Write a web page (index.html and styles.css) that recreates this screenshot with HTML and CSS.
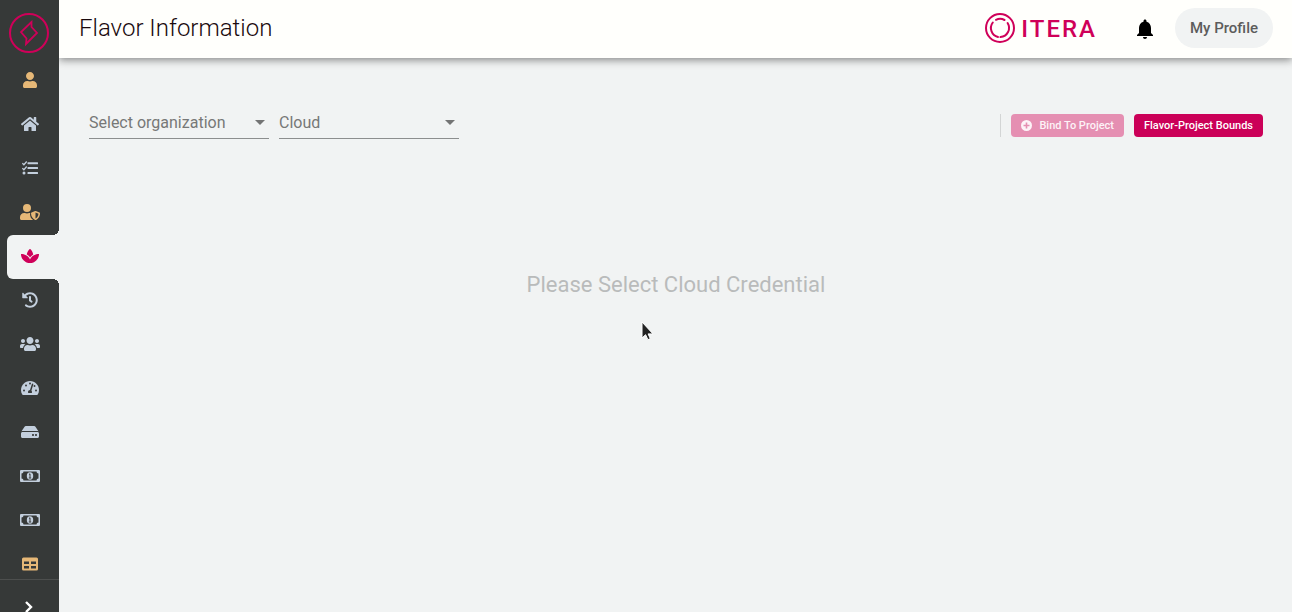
FILE: index.html
```html
<!DOCTYPE html>
<html lang="en">
<head>
<meta charset="utf-8">
<meta name="viewport" content="width=device-width, initial-scale=1">
<title>Flavor Information</title>
<link rel="stylesheet" href="styles.css">
</head>
<body>
<div class="app">
  <aside class="sidebar">
    <a class="brand" href="#" aria-label="Home page">
      <svg width="42" height="42" viewBox="0 0 42 42" fill="none" stroke="#cf0059">
        <circle cx="21" cy="21" r="19" stroke-width="2"/>
        <path d="M23.500 10L13 20l5.500 6.500L18 32l11-11-5.500-6z" stroke-width="1.800"/>
      </svg>
    </a>
    <nav class="menu">
      <a class="item gold" href="#" aria-label="Users"><svg width="14" height="16" viewBox="0 0 448 512"><path d="M224 256c70.700 0 128-57.300 128-128S294.700 0 224 0 96 57.300 96 128s57.300 128 128 128zm89.600 32h-16.700c-22.200 10.200-46.900 16-72.900 16s-50.600-5.800-72.900-16h-16.700C60.200 288 0 348.200 0 422.400V464c0 26.500 21.500 48 48 48h352c26.500 0 48-21.500 48-48v-41.600c0-74.200-60.200-134.400-134.400-134.400z"/></svg></a>
      <a class="item" href="#" aria-label="Home"><svg width="18" height="16" viewBox="0 0 576 512"><path d="M280.370 148.260L96 300.110V464a16 16 0 0 0 16 16l112.060-.29a16 16 0 0 0 15.920-16V368a16 16 0 0 1 16-16h64a16 16 0 0 1 16 16v95.640a16 16 0 0 0 16 16.050L464 480a16 16 0 0 0 16-16V300L295.670 148.260a12.190 12.190 0 0 0-15.300 0zM571.600 251.470L488 182.560V44.050a12 12 0 0 0-12-12h-56a12 12 0 0 0-12 12v72.610L318.470 43a48 48 0 0 0-61 0L4.340 251.470a12 12 0 0 0-1.600 16.900l25.500 31A12 12 0 0 0 45.150 301l235.220-193.740a12.190 12.190 0 0 1 15.300 0L530.900 301a12 12 0 0 0 16.900-1.600l25.500-31a12 12 0 0 0-1.700-16.930z"/></svg></a>
      <a class="item" href="#" aria-label="Tasks"><svg width="16" height="16" viewBox="0 0 16 16"><path d="M6 2.200h9.500q.5 0 .5.500v1q0 .5-.5.500H6q-.5 0-.5-.5v-1q0-.5.5-.5zM6 7h9.500q.5 0 .5.500v1q0 .5-.5.500H6q-.5 0-.5-.5v-1q0-.5.500-.5zM6 12h9.500q.5 0 .5.500v1q0 .5-.5.500H6q-.5 0-.5-.5v-1q0-.5.500-.5z"/><circle cx="2" cy="13" r="1.500"/><path d="M.4 3.200l1.500 1.500L4.700 1.500M.4 8.200l1.500 1.500L4.700 6.500" fill="none" stroke="currentColor" stroke-width="1.300"/></svg></a>
      <a class="item gold" href="#" aria-label="Roles"><svg width="20" height="16" viewBox="0 0 640 512"><path d="M224 256a128 128 0 1 0 0-256 128 128 0 0 0 0 256zm96 68.500c0-12 4-24 11-34-6-1.500-12-2.500-17.400-2.500h-16.700c-22.200 10.200-46.900 16-72.900 16s-50.600-5.800-72.900-16h-16.700C60.200 288 0 348.200 0 422.400V464c0 26.500 21.500 48 48 48h352c7 0 14-2 20-4-70-40-100-115-100-183.500z"/><path fill-rule="evenodd" d="M622.300 271.100l-115.200-45c-4.100-1.600-12.600-3.700-22.200 0l-115.200 45c-10.700 4.200-17.700 14-17.700 24.900 0 111.600 68.700 188.800 132.900 213.900 9.600 3.700 18 1.600 22.200 0C558.400 489.900 640 420.500 640 296c0-10.900-7-20.700-17.700-24.900zM496 462.400V273.300l95.500 37.300c-5.600 87.100-60.900 135.400-95.500 151.800z"/></svg></a>
      <a class="item active" href="#" aria-label="Flavors" aria-current="page"><svg width="18" height="16" viewBox="0 0 576 512"><path d="M568.250 192c-29.040.13-135.010 6.160-213.840 83-33.120 29.630-53.360 63.300-66.410 94.860-13.050-31.560-33.290-65.230-66.410-94.860-78.830-76.840-184.800-82.870-213.840-83-4.410-.02-7.790 3.400-7.750 7.820.23 27.920 7.140 126.140 88.770 199.300C172.790 480.940 256 480 288 480s115.190.95 199.230-80.880c81.640-73.170 88.540-171.380 88.770-199.300.04-4.420-3.340-7.840-7.750-7.820zM287.980 302.600c12.820-18.850 27.600-35.780 44.090-50.520 19.090-18.610 39.580-33.300 60.260-45.180-16.440-70.500-51.720-133.050-96.730-172.220-4.110-3.580-11.020-3.580-15.140 0-44.990 39.140-80.270 101.630-96.740 172.070 20.370 11.700 40.500 26.140 59.220 44.390a282.768 282.768 0 0 1 45.040 51.460z"/></svg></a>
      <a class="item" href="#" aria-label="History"><svg width="16" height="16" viewBox="0 0 512 512"><path d="M504 255.531c.253 136.640-111.180 248.372-247.820 248.468-59.015.042-113.223-20.530-155.822-54.911-11.077-8.940-11.905-25.541-1.839-35.607l11.267-11.267c8.609-8.609 22.353-9.551 31.891-1.984C173.062 425.135 212.781 440 256 440c101.705 0 184-82.311 184-184 0-101.705-82.311-184-184-184-48.814 0-93.149 18.969-126.068 49.932l50.754 50.754c10.080 10.080 2.941 27.314-11.313 27.314H24c-8.837 0-16-7.163-16-16V38.627c0-14.254 17.234-21.393 27.314-11.314l49.372 49.372C129.209 34.136 189.552 8 256 8c136.810 0 247.747 110.780 248 247.531zm-180.912 78.784l9.823-12.630c8.138-10.463 6.253-25.542-4.210-33.679L288 256.349V152c0-13.255-10.745-24-24-24h-16c-13.255 0-24 10.745-24 24v135.651l65.409 50.874c10.463 8.137 25.541 6.253 33.679-4.210z"/></svg></a>
      <a class="item" href="#" aria-label="Groups"><svg width="20" height="16" viewBox="0 0 640 512"><path d="M96 224c35.300 0 64-28.700 64-64s-28.700-64-64-64-64 28.700-64 64 28.700 64 64 64zm448 0c35.300 0 64-28.700 64-64s-28.700-64-64-64-64 28.700-64 64 28.700 64 64 64zm32 32h-64c-17.600 0-33.500 7.100-45.100 18.600 40.300 22.100 68.900 62 75.100 109.400h66c17.700 0 32-14.300 32-32v-32c0-35.300-28.700-64-64-64zm-256 0c61.900 0 112-50.100 112-112S381.900 32 320 32 208 82.100 208 144s50.100 112 112 112zm76.800 32h-8.300c-20.800 10-43.900 16-68.500 16s-47.600-6-68.500-16h-8.300C179.600 288 128 339.600 128 403.200V432c0 26.500 21.500 48 48 48h288c26.500 0 48-21.500 48-48v-28.800c0-63.600-51.600-115.200-115.200-115.200zm-223.700-13.400C161.500 263.100 145.600 256 128 256H64c-35.300 0-64 28.700-64 64v32c0 17.700 14.300 32 32 32h65.900c6.300-47.400 34.900-87.300 75.200-109.400z"/></svg></a>
      <a class="item" href="#" aria-label="Quotas"><svg width="18" height="16" viewBox="0 0 576 512"><path d="M288 32C129 32 0 161 0 320c0 53 14 102 39 145 6 10 16 15 27 15h444c11 0 21-5 27-15 25-43 39-92 39-145C576 161 447 32 288 32z"/><g fill="#363938"><circle cx="288" cy="112" r="31"/><circle cx="160" cy="176" r="31"/><circle cx="96" cy="336" r="31"/><circle cx="480" cy="336" r="31"/><circle cx="432" cy="190" r="31"/><path d="M370 115q28 0 23 28l-59 196q18 20 18 45 0 16-8 32H232q-8-16-8-32c0-34 29-64 64-64l60-190q5-15 22-15z"/></g></svg></a>
      <a class="item" href="#" aria-label="Volumes"><svg width="18" height="16" viewBox="0 0 576 512"><path d="M576 304v96c0 26.510-21.490 48-48 48H48c-26.510 0-48-21.490-48-48v-96c0-26.510 21.490-48 48-48h480c26.510 0 48 21.490 48 48zm-48-80a79.557 79.557 0 0 1 30.777 6.165L462.250 85.374A48.003 48.003 0 0 0 422.311 64H153.689a48 48 0 0 0-39.938 21.374L17.223 230.165A79.557 79.557 0 0 1 48 224h480zm-48 96c-17.673 0-32 14.327-32 32s14.327 32 32 32 32-14.327 32-32-14.327-32-32-32zm-96 0c-17.673 0-32 14.327-32 32s14.327 32 32 32 32-14.327 32-32-14.327-32-32-32z"/></svg></a>
      <a class="item" href="#" aria-label="Billing"><svg width="20" height="16" viewBox="0 0 20 16"><path fill-rule="evenodd" d="M1 2h18q1 0 1 1v10q0 1-1 1H1q-1 0-1-1V3q0-1 1-1zM3.500 3.500a2 2 0 0 1-2 2v5a2 2 0 0 1 2 2h13a2 2 0 0 1 2-2v-5a2 2 0 0 1-2-2z"/><ellipse cx="10" cy="8" rx="3.200" ry="3.700"/><path d="M9 6.500l1-.7v4M8.800 10h2.400" fill="none" stroke="#363938" stroke-width="1"/></svg></a>
      <a class="item" href="#" aria-label="Pricing"><svg width="20" height="16" viewBox="0 0 20 16"><path fill-rule="evenodd" d="M1 2h18q1 0 1 1v10q0 1-1 1H1q-1 0-1-1V3q0-1 1-1zM3.500 3.500a2 2 0 0 1-2 2v5a2 2 0 0 1 2 2h13a2 2 0 0 1 2-2v-5a2 2 0 0 1-2-2z"/><ellipse cx="10" cy="8" rx="3.200" ry="3.700"/><path d="M9 6.500l1-.7v4M8.800 10h2.400" fill="none" stroke="#363938" stroke-width="1"/></svg></a>
      <a class="item gold" href="#" aria-label="Tables"><svg width="16" height="16" viewBox="0 0 16 16"><path fill-rule="evenodd" d="M1.500 1.500h13q1.500 0 1.500 1.500v10q0 1.500-1.500 1.500h-13q-1.500 0-1.500-1.500V3q0-1.500 1.500-1.500zM2 5.500V8h5V5.500zM9 5.500V8h5V5.500zM2 10v2.500h5V10zM9 10v2.500h5V10z"/></svg></a>
    </nav>
    <button class="expand" type="button" aria-label="Expand menu"><svg width="10" height="14" viewBox="0 0 10 14"><path d="M2 2l5 5-5 5" fill="none" stroke="#fff" stroke-width="2.400"/></svg></button>
  </aside>

  <div class="page">
    <header class="topbar">
      <h1 class="title">Flavor Information</h1>
      <div class="logo">
        <svg width="32" height="32" viewBox="0 0 32 32" fill="none" stroke="#cf0059" stroke-width="2">
          <circle cx="16" cy="16" r="14"/>
          <path d="M12 7.800A9.200 9.200 0 0 1 20.500 8M8.800 10.500A9.200 9.200 0 0 0 14 25M16.500 25.100A9.200 9.200 0 0 0 23.600 11" stroke-linecap="round"/>
        </svg>
        <span class="wordmark">ITERA</span>
      </div>
      <button class="bell" type="button" aria-label="Notifications"><svg width="24" height="24" viewBox="0 0 24 24"><path d="M12 22c1.100 0 2-.9 2-2h-4c0 1.100.89 2 2 2zm6-6v-5c0-3.070-1.640-5.640-4.500-6.320V4c0-.83-.67-1.500-1.500-1.500s-1.500.67-1.500 1.500v.68C7.630 5.360 6 7.920 6 11v5l-2 2v1h16v-1l-2-2z"/></svg></button>
      <button class="profile" type="button">My Profile</button>
    </header>

    <main class="content">
      <div class="toolbar">
        <div class="field">
          <select class="select" aria-label="Select organization"><option>Select organization</option></select>
          <svg class="arrow" width="10" height="5" viewBox="0 0 10 5"><path d="M0 0h10L5 5z"/></svg>
        </div>
        <div class="field">
          <select class="select" aria-label="Cloud"><option>Cloud</option></select>
          <svg class="arrow" width="10" height="5" viewBox="0 0 10 5"><path d="M0 0h10L5 5z"/></svg>
        </div>
        <div class="actions">
          <button class="btn" type="button" disabled>
            <svg width="11" height="11" viewBox="0 0 11 11"><path fill-rule="evenodd" d="M5.500 0a5.500 5.500 0 1 0 0 11 5.500 5.500 0 0 0 0-11zM4.700 2.500h1.600v2.200h2.200v1.600H6.300v2.200H4.700V6.300H2.500V4.700h2.200z"/></svg>
            Bind To Project
          </button>
          <button class="btn" type="button">Flavor-Project Bounds</button>
        </div>
      </div>
      <p class="empty">Please Select Cloud Credential</p>
    </main>
  </div>

  <svg class="pointer" width="14" height="22" viewBox="0 0 14 22"><path d="M1 1v16l3.600-3.300 2.300 5 2.400-1.100-2.200-4.700H12z" fill="#222" stroke="#fff" stroke-width="1"/></svg>
</div>
</body>
</html>
```

FILE: styles.css
```css
* {
  box-sizing: border-box;
}

body {
  margin: 0;
  background: #f1f3f3;
  font-family: Roboto, "Liberation Sans", sans-serif;
}

button,
select {
  margin: 0;
  border: 0;
  font-family: inherit;
}

.app {
  position: relative;
  display: flex;
  height: 100vh;
  overflow: hidden;
}

.sidebar {
  display: flex;
  flex-direction: column;
  flex: 0 0 59px;
  background: #363938;
}

.brand {
  display: flex;
  flex: 0 0 59px;
  align-items: flex-end;
  justify-content: center;
  padding: 0 1px 5px 0;
}

.menu {
  flex: 1;
  min-height: 0;
  overflow: hidden;
}

.item {
  display: flex;
  align-items: center;
  justify-content: center;
  height: 44px;
  padding-bottom: 2px;
  color: #c3cfdd;
}

.item svg,
.btn svg,
.arrow {
  fill: currentColor;
}

.gold {
  color: #e6b877;
}

.active {
  position: relative;
  margin-left: 7px;
  padding-right: 7px;
  border-radius: 6px 0 0 6px;
  background: #f1f3f3;
  color: #cf0059;
}

/* Rounded corners of the dark bar above and below the active item */
.active::before,
.active::after {
  content: "";
  position: absolute;
  right: 0;
  width: 6px;
  height: 6px;
}

.active::before {
  top: -6px;
  background: radial-gradient(circle at 0 0, #363938 6px, #f1f3f3 6px);
}

.active::after {
  bottom: -6px;
  background: radial-gradient(circle at 0 100%, #363938 6px, #f1f3f3 6px);
}

.expand {
  display: flex;
  flex: 0 0 33px;
  align-items: flex-start;
  justify-content: center;
  padding: 20px 1px 0 0;
  overflow: hidden;
  border-top: 1px solid #4d4f4e;
  background: #363938;
}

.page {
  display: flex;
  flex: 1;
  flex-direction: column;
  min-width: 0;
}

.topbar {
  display: flex;
  flex: 0 0 58px;
  align-items: center;
  padding: 0 19px 2px 20px;
  background: #fffffc;
  box-shadow: 0 2px 8px rgba(0, 0, 0, 0.45);
  clip-path: inset(0 0 -16px 0);
}

.title {
  flex: 1;
  margin: 0;
  color: #1a0a0e;
  font-size: 24px;
  font-weight: 300;
  line-height: 32px;
}

.logo {
  display: flex;
  align-items: center;
  gap: 5px;
}

.wordmark {
  padding-top: 2px;
  color: #cf0059;
  font-size: 24px;
  font-weight: 500;
  line-height: 30px;
  letter-spacing: 2px;
}

.bell {
  display: flex;
  margin: 0 18px 0 36px;
  padding: 2px 0 0;
  background: none;
}

.profile {
  height: 40px;
  padding: 0 15px;
  border-radius: 20px;
  background: #f1f3f3;
  color: #5c5c5c;
  font-size: 15px;
  font-weight: 500;
}

.content {
  flex: 1;
  padding: 48px 29px 0 30px;
}

.toolbar {
  display: flex;
  gap: 10px;
}

.field {
  position: relative;
  flex: 0 0 180px;
  border-bottom: 1px solid #8c8e8e;
}

.select {
  width: 100%;
  height: 32px;
  padding: 0 24px 0 0;
  appearance: none;
  background: none;
  color: #777877;
  font-size: 16px;
}

.arrow {
  position: absolute;
  top: 14px;
  right: 4px;
  color: #737474;
  pointer-events: none;
}

.actions {
  display: flex;
  gap: 10px;
  align-self: center;
  margin-top: 6px;
  margin-left: auto;
  padding-left: 10px;
  border-left: 1px solid #d3d5d5;
}

.btn {
  display: flex;
  align-items: center;
  gap: 7px;
  height: 23px;
  padding: 0 10px;
  border-radius: 4px;
  background: #cb0058;
  color: #fff;
  font-size: 11px;
  font-weight: 500;
}

.btn:disabled {
  background: #e58fb2;
  color: #fdf3f7;
}

.empty {
  margin: 130px 0 0;
  color: #b9bbbb;
  font-size: 22px;
  line-height: 32px;
  text-align: center;
}

.pointer {
  position: absolute;
  top: 321px;
  left: 641px;
}
```
